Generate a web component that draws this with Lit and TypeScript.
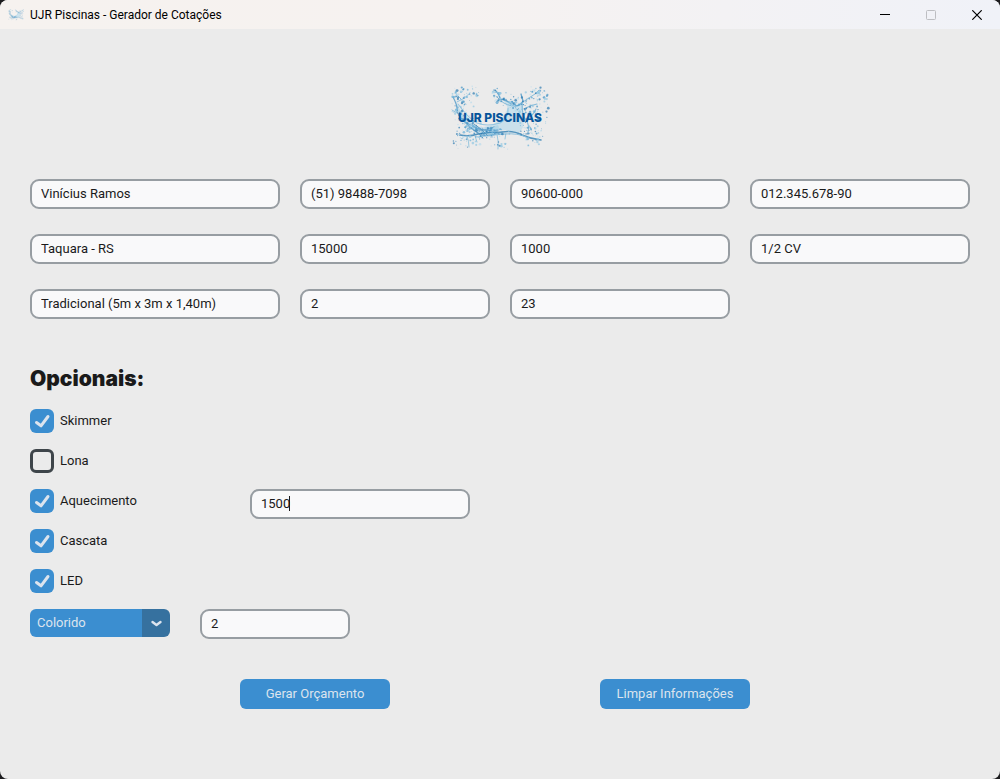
import { LitElement, html, css, svg } from "lit";
import { customElement } from "lit/decorators.js";

interface Field {
  label: string;
  value: string;
}

const fields: Field[] = [
  { label: "Nome", value: "Vinícius Ramos" },
  { label: "Telefone", value: "(51) 98488-7098" },
  { label: "CEP", value: "90600-000" },
  { label: "CPF", value: "012.345.678-90" },
  { label: "Cidade", value: "Taquara - RS" },
  { label: "Valor", value: "15000" },
  { label: "Frete", value: "1000" },
  { label: "Motor", value: "1/2 CV" },
  { label: "Modelo", value: "Tradicional (5m x 3m x 1,40m)" },
  { label: "Quantidade", value: "2" },
  { label: "Prazo", value: "23" },
];

// Centres of the spray clusters: x, y, spread x, spread y, number of drops
const spray = [
  [22, 22, 10, 8, 46],
  [20, 36, 8, 9, 50],
  [30, 52, 12, 9, 70],
  [34, 18, 8, 6, 14],
  [58, 20, 7, 8, 34],
  [76, 28, 11, 8, 60],
  [96, 20, 11, 8, 50],
  [88, 37, 9, 10, 44],
  [90, 54, 12, 8, 50],
  [50, 58, 17, 6, 60],
  [27, 67, 13, 6, 24],
  [60, 70, 8, 5, 14],
  [96, 64, 9, 5, 18],
  [103, 38, 5, 14, 12],
];
const tones = ["#2b79b0", "#4594c6", "#69b0d8", "#92c8e3", "#b9dcec"];

function drops() {
  let seed = 17;
  const rnd = () => (seed = (seed * 16807) % 2147483647) / 2147483647;
  return spray.flatMap(([cx, cy, sx, sy, n]) =>
    Array.from({ length: n }, () => {
      const x = cx + (rnd() + rnd() - 1) * sx * 1.3;
      const y = cy + (rnd() + rnd() - 1) * sy * 1.3;
      const r = 0.4 + rnd() * rnd() * 1.3;
      return svg`<circle cx=${x.toFixed(1)} cy=${y.toFixed(1)} r=${r.toFixed(2)}
        fill=${tones[Math.floor(rnd() * tones.length)]} opacity="0.7" />`;
    }),
  );
}

const splash = () => svg`
  <path d="M62 23 Q75 34 83 26 L83 40 Q86 51 79 58 Q68 54 57 56 Q50 59 44 52 Q61 49 68 33Z" fill="#b4d9eb" opacity=".6"/>
  <path d="M16 27 Q23 43 34 50 Q43 55 58 50 Q62 58 49 61 Q35 60 27 49 Q17 42 16 27Z" fill="#9acce5" opacity=".5"/>
  <g fill="none" stroke-linecap="round" opacity=".75">
    <path d="M13 22 Q18 31 17 37 Q23 48 33 51 Q43 57 58 55" stroke="#4594c6" stroke-width="1.2"/>
    <path d="M18 29 Q27 42 37 48 Q47 52 60 48 Q69 43 68 33" stroke="#7dbbdd" stroke-width="1.1"/>
    <path d="M22 44 Q31 54 41 60 Q49 62 62 57" stroke="#569fcb" stroke-width="1.4"/>
    <path d="M29 52 Q37 56 43 63 M34 49 Q42 54 47 60 M38 55 Q47 56 54 52" stroke="#3c87b8" stroke-width="1"/>
    <path d="M20 60 Q29 62 38 59 Q50 57 62 57 Q73 55 82 60 Q91 64 101 65" stroke="#2478b0" stroke-width="1.6"/>
    <path d="M36 62 Q52 60 65 59 Q78 58 86 62" stroke="#6db1d7" stroke-width="1"/>
    <path d="M55 15 Q60 20 60 24 Q68 25 72 30 Q79 33 83 26 L81 19" stroke="#3c90c3" stroke-width="1.3"/>
    <path d="M54 17 L61 18 M61 26 Q67 31 75 31 M83 27 Q90 22 95 19 L99 15" stroke="#68add4" stroke-width="1"/>
    <path d="M82 28 Q82 41 86 45 Q90 51 88 57 M86 44 Q94 40 96 34 M84 34 Q91 30 97 29" stroke="#62a9d2" stroke-width="1.1"/>
    <path d="M17 27 Q25 24 30 18 M22 25 L16 19 M17 38 L12 35" stroke="#75b5da" stroke-width="1"/>
    <path d="M27 61 Q29 66 29 72 M35 61 L37 67 M57 59 Q59 67 58 74 M66 58 L65 64" stroke="#7dbbdb" stroke-width="1"/>
  </g>
  ${drops()}`;

@customElement("app-root")
export class AppRoot extends LitElement {
  static styles = css`
    :host {
      display: block;
      background: #1c1c1e;
      color: #1a1a1a;
      font: 13px/16px Roboto, sans-serif;
    }
    * {
      box-sizing: border-box;
    }
    .window {
      min-height: 100vh;
      background: #ebebeb;
      border-radius: 8px;
      overflow: hidden;
    }
    .titlebar {
      display: flex;
      align-items: center;
      height: 29px;
      padding-left: 8px;
      background: linear-gradient(90deg, #f6f2ef, #f6f2f0 45%, #f0f2f8);
      color: #000;
      font: 12px/16px Roboto, sans-serif;
    }
    .app-icon {
      width: 16px;
      height: 12px;
      margin-right: 6px;
    }
    .title {
      flex: 1;
      margin: 0;
      font: inherit;
    }
    .window-button {
      width: 46px;
      height: 28px;
      padding: 0;
      border: 0;
      background: none;
      display: grid;
      place-items: center;
      color: #000;
    }
    .window-button:disabled {
      color: #bdbec2;
    }
    .content {
      padding: 46px 30px 30px;
    }
    .logo {
      display: block;
      width: 120px;
      height: 85px;
      margin: 0 auto 19px;
    }
    .logo-text {
      font: 800 12px Inter, sans-serif;
      fill: #07549a;
    }
    .fields {
      display: grid;
      grid-template-columns: 25fr 19fr 22fr 22fr;
      gap: 25px 20px;
    }
    .entry {
      display: block;
      width: 100%;
      height: 30px;
      padding: 0 9px 2px;
      border: 2px solid #979da2;
      border-radius: 9px;
      background: #f9f9fa;
      color: inherit;
      font: inherit;
      outline: none;
    }
    .heading {
      margin: 48px 0 18px;
      font: 900 21px/24px Inter, sans-serif;
    }
    .options {
      display: grid;
      grid-template-columns: 220px 220px;
      grid-auto-rows: 24px;
      row-gap: 16px;
    }
    .option {
      grid-column: 1;
      display: flex;
      gap: 6px;
      line-height: 24px;
      justify-self: start;
    }
    .check {
      appearance: none;
      width: 24px;
      height: 24px;
      margin: 0;
      border: 3px solid #3e454a;
      border-radius: 6px;
    }
    .check:checked {
      border: 0;
      background: #3b8ed0
        url('data:image/svg+xml,<svg xmlns="http://www.w3.org/2000/svg" width="24" height="24"><path d="M6.5 13.5l4.5 3.3L18 7.5" fill="none" stroke="%23dce4ee" stroke-width="3" stroke-linecap="round" stroke-linejoin="round"/></svg>');
    }
    .amount {
      position: relative;
    }
    .caret {
      position: absolute;
      left: 39px;
      top: 7px;
      width: 1px;
      height: 15px;
      background: #1a1a1a;
    }
    .led {
      display: flex;
      gap: 30px;
      margin-top: 16px;
    }
    .select {
      appearance: none;
      width: 140px;
      height: 28px;
      padding: 0 34px 1px 7px;
      border: 0;
      border-radius: 6px;
      color: #dce4ee;
      font: inherit;
      background:
        url('data:image/svg+xml,<svg xmlns="http://www.w3.org/2000/svg" width="28" height="28"><path d="M10.5 13l4 3 4-3" fill="none" stroke="%23dce4ee" stroke-width="2.4" stroke-linecap="round" stroke-linejoin="round"/></svg>')
          right / 28px 28px no-repeat,
        linear-gradient(#36719f, #36719f) right / 28px 100% no-repeat,
        #3b8ed0;
    }
    .led-count {
      width: 150px;
    }
    .actions {
      display: flex;
      justify-content: center;
      gap: 210px;
      margin-top: 40px;
      padding-right: 10px;
    }
    .action {
      width: 150px;
      height: 30px;
      padding: 0 0 1px;
      border: 0;
      border-radius: 6px;
      background: #3b8ed0;
      color: #dce4ee;
      font: inherit;
    }
  `;

  private option(label: string, checked = true) {
    return html`<label class="option">
      <input class="check" type="checkbox" .checked=${checked} />${label}
    </label>`;
  }

  render() {
    return html`
      <div class="window">
        <header class="titlebar">
          <svg class="app-icon" viewBox="8 10 98 68" preserveAspectRatio="none" aria-hidden="true">${splash()}</svg>
          <h1 class="title">UJR Piscinas - Gerador de Cotações</h1>
          <button class="window-button" aria-label="Minimizar">
            <svg width="10" height="10"><path d="M0 4.5h10" stroke="currentColor" /></svg>
          </button>
          <button class="window-button" aria-label="Maximizar" disabled>
            <svg width="10" height="10"><rect x=".5" y=".5" width="9" height="9" rx="1" fill="none" stroke="currentColor" /></svg>
          </button>
          <button class="window-button" aria-label="Fechar">
            <svg width="10" height="10"><path d="M.3.3l9.4 9.4M9.7.3L.3 9.7" stroke="currentColor" stroke-width="1.2" /></svg>
          </button>
        </header>
        <main class="content">
          <svg class="logo" viewBox="0 0 120 85" role="img" aria-label="UJR Piscinas">
            ${splash()}
            <text class="logo-text" x="60" y="47" text-anchor="middle">UJR PISCINAS</text>
          </svg>
          <div class="fields">
            ${fields.map(
              (f) => html`<label><input class="entry" type="text" aria-label=${f.label} .value=${f.value} /></label>`,
            )}
          </div>
          <h2 class="heading">Opcionais:</h2>
          <div class="options">
            ${this.option("Skimmer")} ${this.option("Lona", false)} ${this.option("Aquecimento")}
            <div class="amount">
              <input class="entry" type="text" aria-label="Valor do aquecimento" .value=${"1500"} />
              <span class="caret"></span>
            </div>
            ${this.option("Cascata")} ${this.option("LED")}
          </div>
          <div class="led">
            <select class="select" aria-label="Tipo de LED">
              <option>Colorido</option>
            </select>
            <input class="entry led-count" type="text" aria-label="Quantidade de LED" .value=${"2"} />
          </div>
          <div class="actions">
            <button class="action">Gerar Orçamento</button>
            <button class="action">Limpar Informações</button>
          </div>
        </main>
      </div>
    `;
  }
}
